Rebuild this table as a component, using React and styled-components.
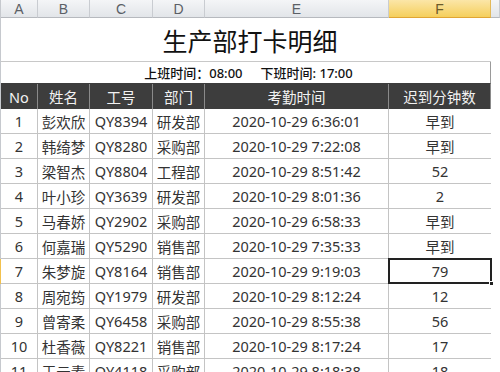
import React from "react";
import styled, { createGlobalStyle, css } from "styled-components";

const GlobalStyle = createGlobalStyle`
  html, body {
    margin: 0;
    padding: 0;
    background: #ffffff;
    overflow: hidden;
  }
  body {
    font-family: "Noto Sans", "Noto Sans CJK SC", sans-serif;
  }
`;

const COLS = "1px 37px 52px 63px 52px 184px 102px 1fr";

const rows = [
  ["1", "彭欢欣", "QY8394", "研发部", "2020-10-29 6:36:01", "早到"],
  ["2", "韩绮梦", "QY8280", "采购部", "2020-10-29 7:22:08", "早到"],
  ["3", "梁智杰", "QY8804", "工程部", "2020-10-29 8:51:42", "52"],
  ["4", "叶小珍", "QY3639", "研发部", "2020-10-29 8:01:36", "2"],
  ["5", "马春娇", "QY2902", "采购部", "2020-10-29 6:58:33", "早到"],
  ["6", "何嘉瑞", "QY5290", "销售部", "2020-10-29 7:35:33", "早到"],
  ["7", "朱梦旋", "QY8164", "销售部", "2020-10-29 9:19:03", "79"],
  ["8", "周宛筠", "QY1979", "研发部", "2020-10-29 8:12:24", "12"],
  ["9", "曾寄柔", "QY6458", "采购部", "2020-10-29 8:55:38", "56"],
  ["10", "杜香薇", "QY8221", "销售部", "2020-10-29 8:17:24", "17"],
  ["11", "王云素", "QY4118", "采购部", "2020-10-29 8:18:38", "18"],
];

const Sheet = styled.div`
  width: 500px;
  height: 372px;
  overflow: hidden;
  background: #ffffff;
`;

const Row = styled.div`
  display: grid;
  grid-template-columns: ${COLS};
  height: ${(p) => p.$h}px;
`;

const RowEdge = styled.div`
  background: ${(p) => (p.$active ? "#f2c14e" : "#c6c9ce")};
`;

const ColHead = styled.div`
  display: flex;
  align-items: center;
  justify-content: center;
  font-family: "Liberation Sans", "Noto Sans", sans-serif;
  font-size: 14px;
  color: #5b5f66;
  border-right: 1px solid #c9ccd1;
  border-bottom: 1px solid #b6b9be;
  background: linear-gradient(#f4f5f7, #e2e5e9);
  ${(p) =>
    p.$active &&
    css`
      color: #6b5a2a;
      background: linear-gradient(#fbe6a8, #f5cf5c);
      border-bottom: 1px solid #e0a534;
      border-right: 1px solid #e3b95a;
    `}
`;

const Title = styled.div`
  grid-column: span 6;
  display: flex;
  align-items: center;
  justify-content: center;
  font-family: "Noto Sans CJK SC", sans-serif;
  font-size: 25px;
  color: #111111;
  padding-left: 8px;
  border-bottom: 1px solid #c8c8c8;
`;

const Sub = styled.div`
  grid-column: span 6;
  display: flex;
  align-items: center;
  justify-content: center;
  gap: 18px;
  font-family: "Noto Sans", "Noto Sans CJK SC", sans-serif;
  font-size: 13px;
  font-weight: 500;
  color: #111111;
  padding-left: 6px;
  border-right: 1px solid #9a9a9a;
  border-bottom: 1px solid #3d3d3d;
`;

const Blank = styled.div`
  background: #ffffff;
`;

const Head = styled.div`
  display: flex;
  align-items: center;
  justify-content: center;
  background: #3d3d3d;
  color: #f2f2f2;
  font-family: "Noto Sans", "Noto Sans CJK SC", sans-serif;
  font-size: 14.5px;
  border-right: 1px solid #8a8a8a;
  &:last-of-type {
    border-right: none;
  }
`;

const Cell = styled.div`
  position: relative;
  display: flex;
  align-items: center;
  justify-content: center;
  font-family: "Noto Sans", "Noto Sans CJK SC", sans-serif;
  font-size: 14.5px;
  color: #333333;
  white-space: nowrap;
  border-bottom: 1px solid #c4c4c4;
  border-right: ${(p) => (p.$last ? "none" : "1px solid #c4c4c4")};
  ${(p) =>
    p.$selected &&
    css`
      &::after {
        content: "";
        position: absolute;
        left: -1px;
        top: -1px;
        right: -1px;
        bottom: -1px;
        border: 2px solid #222222;
      }
      &::before {
        content: "";
        position: absolute;
        right: -3px;
        bottom: -3px;
        width: 5px;
        height: 5px;
        background: #222222;
        border: 1px solid #ffffff;
        box-sizing: border-box;
        z-index: 2;
      }
    `}
`;

const letters = ["A", "B", "C", "D", "E", "F", ""];
const headers = ["No", "姓名", "工号", "部门", "考勤时间", "迟到分钟数"];

export default function App() {
  return (
    <Sheet>
      <GlobalStyle />
      <Row $h={18}>
        <RowEdge />
        {letters.map((l, i) => (
          <ColHead key={i} $active={l === "F"}>
            {l}
          </ColHead>
        ))}
      </Row>
      <Row $h={44}>
        <RowEdge />
        <Title>生产部打卡明细</Title>
        <Blank />
      </Row>
      <Row $h={22}>
        <RowEdge />
        <Sub>
          <span>上班时间：08:00</span>
          <span>下班时间: 17:00</span>
        </Sub>
        <Blank />
      </Row>
      <Row $h={25}>
        <RowEdge />
        {headers.map((h) => (
          <Head key={h}>{h}</Head>
        ))}
        <Blank />
      </Row>
      {rows.map((r) => (
        <Row $h={25} key={r[0]}>
          <RowEdge $active={r[0] === "7"} />
          {r.map((v, i) => (
            <Cell
              key={i}
              $last={i === 5}
              $selected={r[0] === "7" && i === 5}
            >
              {v}
            </Cell>
          ))}
          <Blank />
        </Row>
      ))}
    </Sheet>
  );
}
